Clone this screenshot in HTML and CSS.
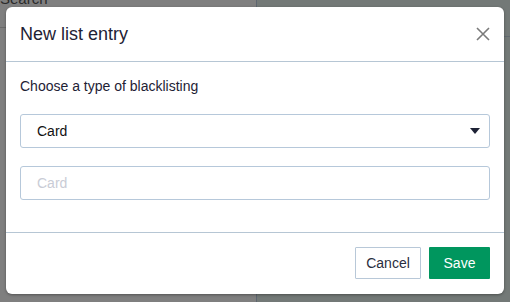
FILE: index.html
```html
<!DOCTYPE html>
<html>
<head>
    <meta charset="UTF-8">
    <title>New list entry</title>
    <link rel="stylesheet" href="styles.css">
</head>
<body>
    <!-- page behind the overlay -->
    <div class="page">
        <div class="page-left">
            <div class="search">Search</div>
        </div>
        <div class="page-right"></div>
    </div>

    <div class="modal">
        <div class="modal-header">
            <h1>New list entry</h1>
            <button class="close" type="button" aria-label="Close">
                <svg width="14" height="14" viewBox="0 0 14 14">
                    <path d="M1 1 L13 13 M13 1 L1 13" stroke="#7a7a7a" stroke-width="1.6" fill="none"/>
                </svg>
            </button>
        </div>
        <div class="modal-body">
            <label class="field-label">Choose a type of blacklisting</label>
            <div class="select">
                <span>Card</span>
                <svg class="caret" width="10" height="6" viewBox="0 0 10 6">
                    <path d="M0 0 H10 L5 6 Z" fill="#1e2235"/>
                </svg>
            </div>
            <input class="text-input" type="text" placeholder="Card">
        </div>
        <div class="modal-footer">
            <button class="btn btn-cancel" type="button">Cancel</button>
            <button class="btn btn-save" type="button">Save</button>
        </div>
    </div>
</body>
</html>
```
FILE: styles.css
```css
/* General */
body {
    margin: 0;
    font-family: "Liberation Sans", Arial, sans-serif;
    width: 510px;
    height: 302px;
    overflow: hidden;
    position: relative;
}

/* Page behind the dimmed overlay */
.page {
    display: flex;
    height: 302px;
}

.page-left {
    width: 256px;
    background-color: #7f7f7f;
    border-right: 1px solid #5e6670;
}

.page-right {
    flex: 1;
    background-color: #737977;
    background-image: linear-gradient(#737977 36px, #626a70 36px, #626a70 37px, #737977 37px);
}

.search {
    height: 36px;
    border-bottom: 1px solid #6a6a6a;
    color: #2a2a2a;
    font-size: 15px;
    line-height: 1;
    margin-top: -9px;
}

/* Modal */
.modal {
    position: absolute;
    left: 6px;
    top: 7px;
    width: 498px;
    height: 287px;
    background-color: #fff;
    border-radius: 6px;
    box-shadow: 0 1px 3px rgba(0, 0, 0, 0.35);
    display: flex;
    flex-direction: column;
}

.modal-header {
    height: 54px;
    display: flex;
    align-items: center;
    justify-content: space-between;
    padding: 0 14px;
    border-bottom: 1px solid #b6c6d4;
}

.modal-header h1 {
    margin: 0;
    font-size: 18px;
    font-weight: normal;
    color: #1e2235;
    padding-top: 1px;
}

.close {
    border: none;
    background: none;
    padding: 0;
    width: 14px;
    height: 14px;
    display: flex;
}

.modal-body {
    flex: 1;
    padding: 14px 14px 0;
    display: flex;
    flex-direction: column;
}

.field-label {
    font-size: 14px;
    line-height: 20px;
    color: #1e2235;
    margin-bottom: 18px;
}

.select {
    height: 32px;
    border: 1px solid #b6c8da;
    border-radius: 3px;
    display: flex;
    align-items: center;
    justify-content: space-between;
    padding: 0 9px 0 16px;
    font-size: 14px;
    color: #111;
}

.caret {
    display: block;
}

.text-input {
    margin-top: 18px;
    height: 34px;
    box-sizing: border-box;
    border: 1px solid #b6c8da;
    border-radius: 3px;
    padding: 0 16px;
    font-family: "Liberation Sans", Arial, sans-serif;
    font-size: 14px;
    outline: none;
}

.text-input::placeholder {
    color: #c9ccd6;
}

.modal-footer {
    height: 62px;
    border-top: 1px solid #b6c6d4;
    display: flex;
    justify-content: flex-end;
    align-items: flex-start;
    gap: 8px;
    padding: 14px 14px 0;
    box-sizing: border-box;
}

.btn {
    height: 32px;
    font-family: "Liberation Sans", Arial, sans-serif;
    font-size: 14px;
    border-radius: 1px;
    cursor: pointer;
}

.btn-cancel {
    width: 66px;
    background-color: #fff;
    border: 1px solid #b8c8d8;
    color: #2a2e40;
}

.btn-save {
    width: 61px;
    background-color: #00965e;
    border: none;
    color: #fff;
}
```
